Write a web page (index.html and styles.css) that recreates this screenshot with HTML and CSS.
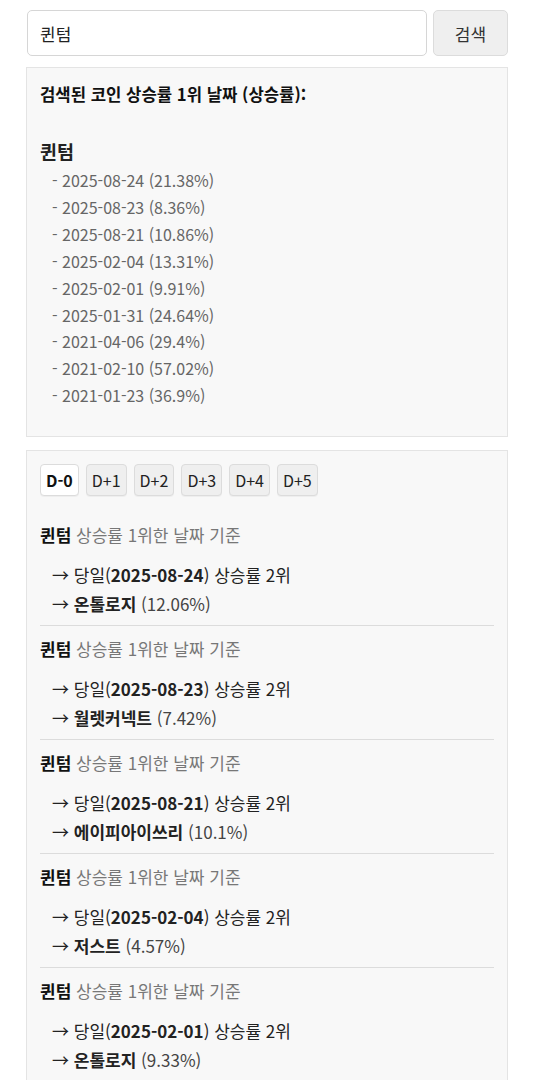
FILE: index.html
```html
<!DOCTYPE html>
<html lang="ko">
<head>
<meta charset="utf-8">
<link rel="stylesheet" href="styles.css">
</head>
<body>
<div class="page">
  <div class="search">
    <input class="search-input" type="text" value="퀸텀">
    <button class="search-btn">검색</button>
  </div>

  <div class="box summary">
    <div class="summary-title">검색된 코인 상승률 1위 날짜 (상승률):</div>
    <div class="coin-name">퀸텀</div>
    <ul class="date-list">
      <li>- 2025-08-24 (21.38%)</li>
      <li>- 2025-08-23 (8.36%)</li>
      <li>- 2025-08-21 (10.86%)</li>
      <li>- 2025-02-04 (13.31%)</li>
      <li>- 2025-02-01 (9.91%)</li>
      <li>- 2025-01-31 (24.64%)</li>
      <li>- 2021-04-06 (29.4%)</li>
      <li>- 2021-02-10 (57.02%)</li>
      <li>- 2021-01-23 (36.9%)</li>
    </ul>
  </div>

  <div class="box results">
    <div class="tabs">
      <button class="tab active">D-0</button>
      <button class="tab">D+1</button>
      <button class="tab">D+2</button>
      <button class="tab">D+3</button>
      <button class="tab">D+4</button>
      <button class="tab">D+5</button>
    </div>

    <div class="entry">
      <div class="entry-title"><b>퀸텀</b> <span class="muted">상승률 1위한 날짜 기준</span></div>
      <div class="entry-lines">
        <div>→ 당일(<b>2025-08-24</b>) 상승률 2위</div>
        <div>→ <b>온톨로지</b> <span class="pct">(12.06%)</span></div>
      </div>
    </div>
    <div class="entry">
      <div class="entry-title"><b>퀸텀</b> <span class="muted">상승률 1위한 날짜 기준</span></div>
      <div class="entry-lines">
        <div>→ 당일(<b>2025-08-23</b>) 상승률 2위</div>
        <div>→ <b>월렛커넥트</b> <span class="pct">(7.42%)</span></div>
      </div>
    </div>
    <div class="entry">
      <div class="entry-title"><b>퀸텀</b> <span class="muted">상승률 1위한 날짜 기준</span></div>
      <div class="entry-lines">
        <div>→ 당일(<b>2025-08-21</b>) 상승률 2위</div>
        <div>→ <b>에이피아이쓰리</b> <span class="pct">(10.1%)</span></div>
      </div>
    </div>
    <div class="entry">
      <div class="entry-title"><b>퀸텀</b> <span class="muted">상승률 1위한 날짜 기준</span></div>
      <div class="entry-lines">
        <div>→ 당일(<b>2025-02-04</b>) 상승률 2위</div>
        <div>→ <b>저스트</b> <span class="pct">(4.57%)</span></div>
      </div>
    </div>
    <div class="entry">
      <div class="entry-title"><b>퀸텀</b> <span class="muted">상승률 1위한 날짜 기준</span></div>
      <div class="entry-lines">
        <div>→ 당일(<b>2025-02-01</b>) 상승률 2위</div>
        <div>→ <b>온톨로지</b> <span class="pct">(9.33%)</span></div>
      </div>
    </div>
    <div class="entry">
      <div class="entry-title"><b>퀸텀</b> <span class="muted">상승률 1위한 날짜 기준</span></div>
      <div class="entry-lines">
        <div>→ 당일(<b>2025-01-31</b>) 상승률 2위</div>
        <div>→ <b>온톨로지</b> <span class="pct">(11.2%)</span></div>
      </div>
    </div>
  </div>
</div>
</body>
</html>
```

FILE: styles.css
```css
html, body {
  margin: 0;
  padding: 0;
  background: #ffffff;
}
body {
  font-family: "Noto Sans CJK KR", "Noto Sans", sans-serif;
  color: #222;
  font-size: 16px;
}
.page {
  padding: 10px 26px 0 26px;
  display: flex;
  flex-direction: column;
  gap: 11px;
}
.search {
  display: flex;
  gap: 6px;
  padding-left: 1px;
}
.search-input {
  flex: 1;
  height: 46px;
  box-sizing: border-box;
  border: 1px solid #d6d6d6;
  border-radius: 5px;
  padding: 0 12px;
  font-family: inherit;
  font-size: 17px;
  color: #222;
  background: #fff;
  min-width: 0;
}
.search-btn {
  width: 75px;
  height: 46px;
  box-sizing: border-box;
  border: 1px solid #dcdcdc;
  border-radius: 5px;
  background: #efefef;
  font-family: inherit;
  font-size: 17px;
  color: #333;
}
.box {
  background: #f8f8f8;
  border: 1px solid #e4e4e4;
  padding: 14px 13px;
}
.summary {
  padding-top: 14px;
  padding-bottom: 27px;
}
.summary-title {
  font-size: 16.7px;
  font-weight: bold;
  line-height: 24px;
  color: #111;
}
.coin-name {
  margin-top: 32px;
  font-size: 18.5px;
  font-weight: bold;
  line-height: 26px;
  color: #222;
}
.date-list {
  list-style: none;
  margin: 3px 0 0 0;
  padding: 0 0 0 12px;
  color: #666;
  font-size: 16px;
  line-height: 26.9px;
}
.results {
  margin-top: 2px;
  padding-top: 13px;
}
.tabs {
  display: flex;
  gap: 7px;
  margin-bottom: 16px;
}
.tab {
  height: 32px;
  padding: 0 5px;
  box-sizing: border-box;
  border: 1px solid #dcdcdc;
  border-radius: 4px;
  background: #efefef;
  font-family: inherit;
  font-size: 16px;
  color: #222;
  box-shadow: 0 1px 0 rgba(0, 0, 0, 0.04);
}
.tab.active {
  background: #fff;
  font-weight: bold;
  color: #111;
}
.entry {
  padding: 10px 0 7px 0;
  border-bottom: 1px solid #dcdcdc;
  font-size: 17px;
}
.entry-title {
  line-height: 26px;
  color: #111;
}
.muted {
  color: #777;
}
.entry-lines {
  margin-top: 12px;
  padding-left: 12px;
  line-height: 29px;
  color: #222;
}
.pct {
  color: #444;
}
```
